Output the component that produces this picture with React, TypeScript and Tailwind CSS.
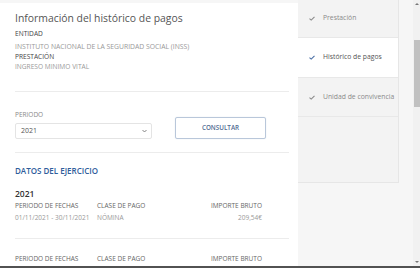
import React from "react";

const SIDE = [
  { label: "Prestación", active: false, h: "h-[38px]" },
  { label: "Histórico de pagos", active: true, h: "h-[40px]" },
  { label: "Unidad de convivencia", active: false, h: "h-[39px]" },
];

function Check({ color }: { color: string }) {
  return (
    <svg width="6" height="5" viewBox="0 0 6 5" fill="none" stroke={color} strokeWidth="1.1">
      <path d="M0.5 2.6 2.2 4.1 5.5 0.8" />
    </svg>
  );
}

function Row({ a, b, c }: { a: string; b: string; c: string }) {
  return (
    <div className="flex w-[247px] text-[6.5px] leading-[10px]">
      <div className="w-[82px]">{a}</div>
      <div className="flex-1">{b}</div>
      <div className="text-right">{c}</div>
    </div>
  );
}

export default function App() {
  return (
    <div
      className="w-[420px] h-[268px] overflow-hidden flex flex-col bg-[#f6f6f6]"
      style={{ fontFamily: '"Open Sans", "Liberation Sans", sans-serif' }}
    >
      <div className="flex flex-1 min-h-0">
        {/* Main panel */}
        <main className="w-[298px] mt-[3px] bg-white pl-[15px] pr-[9px] overflow-hidden">
          <h1 className="mt-[7px] text-[10.4px] leading-[16px] text-[#555]">
            Información del histórico de pagos
          </h1>
          <div className="mt-[3px] text-[6.6px] leading-[10px] text-[#444]">ENTIDAD</div>
          <div className="mt-[3px] text-[6.8px] leading-[10px] text-[#999]">
            INSTITUTO NACIONAL DE LA SEGURIDAD SOCIAL (INSS)
          </div>
          <div className="text-[6.6px] leading-[10px] text-[#444]">PRESTACIÓN</div>
          <div className="text-[6.6px] leading-[10px] text-[#999]">INGRESO MINIMO VITAL</div>

          <div className="mt-[19px] border-t border-[#ececec]" />

          <div className="mt-[18px] flex items-end">
            <div className="w-[137px]">
              <div className="text-[6.5px] leading-[10px] text-[#888]">PERIODO</div>
              <div className="mt-[3px] h-[16px] border border-[#e4e4e4] rounded-[2px] flex items-center justify-between pl-[5px] pr-[4px]">
                <span className="text-[7px] text-[#555]">2021</span>
                <svg width="5" height="4" viewBox="0 0 5 4" fill="none" stroke="#777" strokeWidth="0.9">
                  <path d="M0.5 1 2.5 3 4.5 1" />
                </svg>
              </div>
            </div>
            <button className="ml-[23px] w-[91px] h-[22px] border border-[#b9c7da] rounded-[2px] shadow-[0_0_1px_#c8d3e2] text-[6.3px] font-semibold text-[#4f6b93]">
              CONSULTAR
            </button>
          </div>

          <div className="mt-[13px] border-t border-[#ececec]" />

          <h2 className="mt-[12px] text-[8px] leading-[12px] font-semibold text-[#2f5d9b]">
            DATOS DEL EJERCICIO
          </h2>
          <div className="mt-[11px] text-[8.5px] leading-[12px] font-semibold text-[#333]">2021</div>
          <div className="mt-[1px] text-[#666]">
            <Row a="PERIODO DE FECHAS" b="CLASE DE PAGO" c="IMPORTE BRUTO" />
          </div>
          <div className="mt-[2px] text-[#999]">
            <Row a="01/11/2021 - 30/11/2021" b="NÓMINA" c="209,54€" />
          </div>

          <div className="mt-[15px] border-t border-[#ececec]" />

          <div className="mt-[15px] text-[#666]">
            <Row a="PERIODO DE FECHAS" b="CLASE DE PAGO" c="IMPORTE BRUTO" />
          </div>
        </main>

        {/* Side navigation */}
        <aside className="w-[101px] h-[183px] bg-[#f3f3f3] border-r border-b border-[#e6e6e6] flex flex-col">
          {SIDE.map((s) => (
            <div
              key={s.label}
              className={`${s.h} flex items-center pl-[11px] gap-[8px] border-b border-[#e8e8e8] ${
                s.active ? "bg-white" : ""
              }`}
            >
              <Check color={s.active ? "#4a6fa5" : "#8a8a8a"} />
              <span
                className={`whitespace-nowrap text-[6.8px] ${s.active ? "text-[#555]" : "text-[#8a8a8a]"}`}
              >
                {s.label}
              </span>
            </div>
          ))}
        </aside>

        <div className="flex-1" />

        {/* Scrollbar */}
        <div className="w-[7px] bg-[#f1f1f1] flex flex-col items-center">
          <div className="h-[8px] flex items-center justify-center">
            <div className="w-0 h-0 border-l-[2px] border-r-[2px] border-b-[2px] border-l-transparent border-r-transparent border-b-[#777]" />
          </div>
          <div className="mt-[32px] w-[6px] h-[67px] bg-[#c1c1c1]" />
          <div className="flex-1" />
          <div className="h-[8px] flex items-center justify-center">
            <div className="w-0 h-0 border-l-[2px] border-r-[2px] border-t-[2px] border-l-transparent border-r-transparent border-t-[#777]" />
          </div>
        </div>
      </div>
      <div className="h-[2px] bg-[#525252]" />
    </div>
  );
}
